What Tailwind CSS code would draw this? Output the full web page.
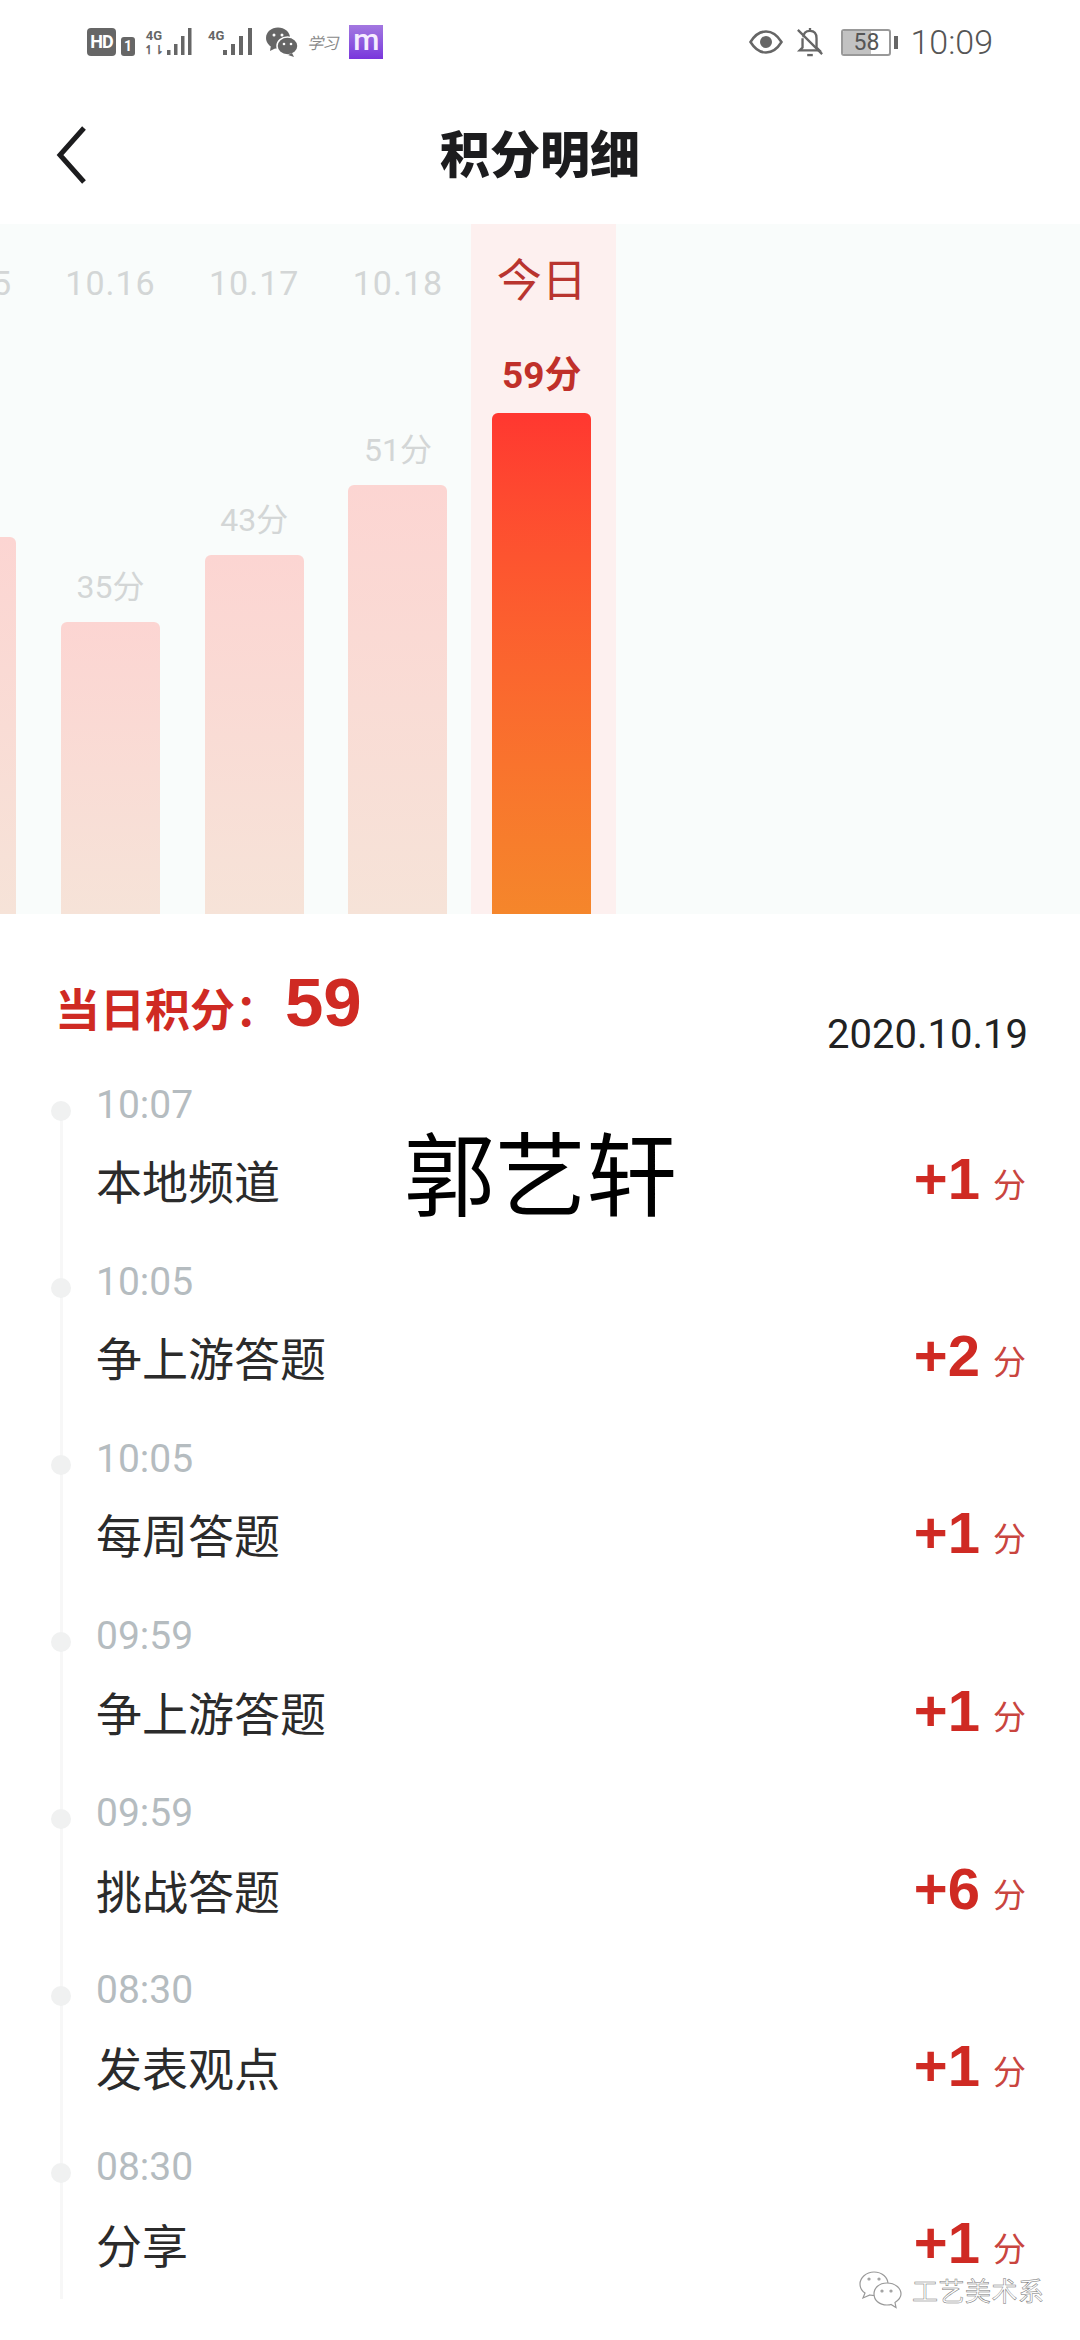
<!DOCTYPE html>
<html lang="zh">
<head>
<meta charset="utf-8">
<script src="https://cdn.jsdelivr.net/npm/@tailwindcss/browser@4"></script>
</head>
<body class="bg-white">
<div class="relative w-[1080px] h-[2340px] overflow-hidden bg-white font-['Roboto','Noto_Sans_CJK_SC',sans-serif]">

  <!-- status bar -->
  <div class="h-[84px] flex items-center justify-between pl-[87px] pr-[87px] text-[#666]">
    <div class="flex items-center">
      <span class="w-[29px] h-[28px] rounded-[4px] bg-[#666] text-white text-[18px] leading-[28px] font-bold text-center tracking-[-1px]">HD</span>
      <span class="ml-[5px] mt-[8px] w-[14px] h-[19px] rounded-[3px] bg-[#666] text-white text-[14px] leading-[19px] font-bold text-center">1</span>
      <div class="ml-[11px] w-[16px] flex flex-col items-center">
        <span class="text-[13px] leading-[15px] font-bold">4G</span>
        <span class="text-[12px] leading-[14px] font-bold">↿⇂</span>
      </div>
      <svg class="ml-[5px]" width="28" height="32" viewBox="0 0 28 32" fill="#666"><rect x="0" y="24" width="3.5" height="5"/><rect x="7" y="18" width="3.5" height="11"/><rect x="14" y="10" width="3.5" height="19"/><rect x="21" y="2" width="3.5" height="27"/></svg>
      <span class="ml-[13px] -mt-[14px] text-[13px] leading-[15px] font-bold">4G</span>
      <svg class="-ml-[1px]" width="34" height="32" viewBox="0 0 34 32" fill="#666"><rect x="0" y="24" width="4" height="5"/><rect x="8" y="18" width="4" height="11"/><rect x="16" y="10" width="4" height="19"/><rect x="25" y="2" width="4" height="27"/></svg>
      <svg class="ml-[9px]" width="32" height="30" viewBox="0 0 32 30" fill="#666"><ellipse cx="12" cy="11" rx="12" ry="10.5"/><path d="M5 18l-1 6 6-3z"/><ellipse cx="21.500" cy="19" rx="10.500" ry="9" stroke="#fff" stroke-width="1.500"/><path d="M26 26l2 4-6-2z"/><circle cx="8" cy="8" r="1.500" fill="#fff"/><circle cx="16" cy="8" r="1.500" fill="#fff"/><circle cx="18" cy="17" r="1.300" fill="#fff"/><circle cx="25" cy="17" r="1.300" fill="#fff"/></svg>
      <span class="ml-[9px] w-[34px] text-[16px] leading-[20px] italic text-[#8a8a8a] tracking-[-1px] font-['Noto_Sans_CJK_SC',sans-serif]">学习</span>
      <span class="ml-[8px] w-[34px] h-[34px] bg-gradient-to-b from-[#a377e0] to-[#7a35dc] text-[#f4ecff] text-[30px] leading-[30px] text-center font-medium">m</span>
    </div>
    <div class="flex items-center">
      <svg width="34" height="24" viewBox="0 0 34 24" fill="none" stroke="#666" stroke-width="2.500"><path d="M1.500 12C7 3 13 1.500 17 1.500S27 3 32.500 12C27 21 21 22.500 17 22.500S7 21 1.500 12z"/><circle cx="17" cy="12" r="6" fill="#666" stroke="none"/></svg>
      <svg class="ml-[13px]" width="28" height="32" viewBox="0 0 30 32" fill="none" stroke="#666" stroke-width="2.500"><path d="M15 1v3M8 11c0-5 3-7 7-7s7 2 7 8v10l3 3H4l3-3V12"/><path d="M2 3l26 26"/><path d="M12 30h6"/></svg>
      <div class="relative ml-[17px] w-[50px] h-[27px] rounded-[3px] border-2 border-[#999] overflow-hidden">
        <div class="h-full w-[28px] bg-[#c2c2c2]"></div>
        <span class="absolute inset-0 text-center text-[23px] leading-[23px] text-[#555]">58</span>
      </div>
      <span class="ml-[3px] w-[4px] h-[13px] bg-[#666]"></span>
      <span class="ml-[12px] text-[34px] leading-[40px] font-light text-[#555]">10:09</span>
    </div>
  </div>

  <!-- header -->
  <div class="relative h-[140px] flex items-center justify-center">
    <svg class="absolute left-[54px] top-[41px]" width="34" height="60" viewBox="0 0 34 60" fill="none" stroke="#1c1c1e" stroke-width="5"><path d="M30 3L6 30l24 27"/></svg>
    <span class="text-[50px] leading-[60px] font-black text-[#1c1c1e] font-['Noto_Sans_CJK_SC',sans-serif] -mt-[6px]">积分明细</span>
  </div>

  <!-- chart -->
  <div class="h-[690px] bg-[#f9fcfb] overflow-hidden flex pl-[40px] -ml-[145px] w-[1225px]">
    <div class="w-[143.7px] shrink-0 flex flex-col items-center">
      <span class="mt-[39px] text-[34px] leading-[40px] tracking-[1px] text-[#d3d6d6]">10.15</span>
      <div class="flex-1"></div>
      <div class="w-[99px] h-[377px] rounded-t-[6px] bg-gradient-to-b from-[#fcd5d2] to-[#f6e3d8]"></div>
    </div>
    <div class="w-[143.7px] shrink-0 flex flex-col items-center">
      <span class="mt-[39px] text-[34px] leading-[40px] tracking-[1px] text-[#d3d6d6]">10.16</span>
      <div class="flex-1"></div>
      <span class="mb-[15px] text-[32px] leading-[40px] text-[#d3d6d6]">35分</span>
      <div class="w-[99px] h-[292px] rounded-t-[6px] bg-gradient-to-b from-[#fcd5d2] to-[#f6e3d8]"></div>
    </div>
    <div class="w-[143.7px] shrink-0 flex flex-col items-center">
      <span class="mt-[39px] text-[34px] leading-[40px] tracking-[1px] text-[#d3d6d6]">10.17</span>
      <div class="flex-1"></div>
      <span class="mb-[15px] text-[32px] leading-[40px] text-[#d3d6d6]">43分</span>
      <div class="w-[99px] h-[359px] rounded-t-[6px] bg-gradient-to-b from-[#fcd5d2] to-[#f6e3d8]"></div>
    </div>
    <div class="w-[143.7px] shrink-0 flex flex-col items-center">
      <span class="mt-[39px] text-[34px] leading-[40px] tracking-[1px] text-[#d3d6d6]">10.18</span>
      <div class="flex-1"></div>
      <span class="mb-[15px] text-[32px] leading-[40px] text-[#d3d6d6]">51分</span>
      <div class="w-[99px] h-[429px] rounded-t-[6px] bg-gradient-to-b from-[#fcd5d2] to-[#f6e3d8]"></div>
    </div>
    <div class="ml-[1px] w-[145px] shrink-0 flex flex-col items-center bg-[#fdf0ef]">
      <span class="-ml-[3px] mt-[29px] text-[45px] leading-[50px] text-[#b9352f] font-['Noto_Sans_CJK_SC',sans-serif]">今日</span>
      <div class="flex-1"></div>
      <span class="-ml-[3px] mb-[17px] text-[37px] leading-[40px] font-bold text-[#c0302a]">59分</span>
      <div class="-ml-[3px] w-[99px] h-[501px] rounded-t-[6px] bg-gradient-to-b from-[#ff3730] to-[#f5862b]"></div>
    </div>
  </div>

  <!-- daily total -->
  <div class="h-[166px] px-[55px] flex justify-between">
    <div class="mt-[50px] h-[80px] flex items-center text-[#cf2a23]">
      <span class="w-[230px] mt-[8px] text-[45px] leading-[50px] font-bold whitespace-nowrap font-['Noto_Sans_CJK_SC',sans-serif]">当日积分：</span>
      <span class="-mt-[3px] text-[69px] leading-[80px] font-bold font-['Liberation_Sans',sans-serif]">59</span>
    </div>
    <span class="-mr-[3px] mt-[101px] text-[40px] leading-[40px] text-[#222]">2020.10.19</span>
  </div>

  <!-- timeline -->
  <div class="relative">
    <div class="absolute left-[60px] top-[30px] bottom-[20px] w-[3px] bg-[#f7f7f7]"></div>

    <div class="relative h-[177px] pl-[96px] pr-[55px]">
      <div class="absolute left-[51px] top-[21px] w-[20px] h-[20px] rounded-full bg-[#f0f1f1]"></div>
      <div class="pt-[1px] text-[39px] leading-[48px] text-[#b5bcc0]">10:07</div>
      <div class="mt-[20px] h-[60px] flex items-center justify-between">
        <span class="text-[46px] leading-[60px] text-[#2b2b2b] font-['Noto_Sans_CJK_SC',sans-serif]">本地频道</span>
        <span class="-mr-[3px] flex items-center text-[#cf2a23]"><b class="text-[58px] leading-[60px] font-bold font-['Liberation_Sans',sans-serif]">+1</b><span class="ml-[13px] mt-[8px] w-[35px] text-[33px] leading-[40px] font-['Noto_Sans_CJK_SC',sans-serif] text-[#c9453f]">分</span></span>
      </div>
    </div>

    <div class="relative h-[177px] pl-[96px] pr-[55px]">
      <div class="absolute left-[51px] top-[21px] w-[20px] h-[20px] rounded-full bg-[#f0f1f1]"></div>
      <div class="pt-[1px] text-[39px] leading-[48px] text-[#b5bcc0]">10:05</div>
      <div class="mt-[20px] h-[60px] flex items-center justify-between">
        <span class="text-[46px] leading-[60px] text-[#2b2b2b] font-['Noto_Sans_CJK_SC',sans-serif]">争上游答题</span>
        <span class="-mr-[3px] flex items-center text-[#cf2a23]"><b class="text-[58px] leading-[60px] font-bold font-['Liberation_Sans',sans-serif]">+2</b><span class="ml-[13px] mt-[8px] w-[35px] text-[33px] leading-[40px] font-['Noto_Sans_CJK_SC',sans-serif] text-[#c9453f]">分</span></span>
      </div>
    </div>

    <div class="relative h-[177px] pl-[96px] pr-[55px]">
      <div class="absolute left-[51px] top-[21px] w-[20px] h-[20px] rounded-full bg-[#f0f1f1]"></div>
      <div class="pt-[1px] text-[39px] leading-[48px] text-[#b5bcc0]">10:05</div>
      <div class="mt-[20px] h-[60px] flex items-center justify-between">
        <span class="text-[46px] leading-[60px] text-[#2b2b2b] font-['Noto_Sans_CJK_SC',sans-serif]">每周答题</span>
        <span class="-mr-[3px] flex items-center text-[#cf2a23]"><b class="text-[58px] leading-[60px] font-bold font-['Liberation_Sans',sans-serif]">+1</b><span class="ml-[13px] mt-[8px] w-[35px] text-[33px] leading-[40px] font-['Noto_Sans_CJK_SC',sans-serif] text-[#c9453f]">分</span></span>
      </div>
    </div>

    <div class="relative h-[177px] pl-[96px] pr-[55px]">
      <div class="absolute left-[51px] top-[21px] w-[20px] h-[20px] rounded-full bg-[#f0f1f1]"></div>
      <div class="pt-[1px] text-[39px] leading-[48px] text-[#b5bcc0]">09:59</div>
      <div class="mt-[21px] h-[60px] flex items-center justify-between">
        <span class="text-[46px] leading-[60px] text-[#2b2b2b] font-['Noto_Sans_CJK_SC',sans-serif]">争上游答题</span>
        <span class="-mr-[3px] flex items-center text-[#cf2a23]"><b class="text-[58px] leading-[60px] font-bold font-['Liberation_Sans',sans-serif]">+1</b><span class="ml-[13px] mt-[8px] w-[35px] text-[33px] leading-[40px] font-['Noto_Sans_CJK_SC',sans-serif] text-[#c9453f]">分</span></span>
      </div>
    </div>

    <div class="relative h-[177px] pl-[96px] pr-[55px]">
      <div class="absolute left-[51px] top-[21px] w-[20px] h-[20px] rounded-full bg-[#f0f1f1]"></div>
      <div class="pt-[1px] text-[39px] leading-[48px] text-[#b5bcc0]">09:59</div>
      <div class="mt-[22px] h-[60px] flex items-center justify-between">
        <span class="text-[46px] leading-[60px] text-[#2b2b2b] font-['Noto_Sans_CJK_SC',sans-serif]">挑战答题</span>
        <span class="-mr-[3px] flex items-center text-[#cf2a23]"><b class="text-[58px] leading-[60px] font-bold font-['Liberation_Sans',sans-serif]">+6</b><span class="ml-[13px] mt-[8px] w-[35px] text-[33px] leading-[40px] font-['Noto_Sans_CJK_SC',sans-serif] text-[#c9453f]">分</span></span>
      </div>
    </div>

    <div class="relative h-[177px] pl-[96px] pr-[55px]">
      <div class="absolute left-[51px] top-[21px] w-[20px] h-[20px] rounded-full bg-[#f0f1f1]"></div>
      <div class="pt-[1px] text-[39px] leading-[48px] text-[#b5bcc0]">08:30</div>
      <div class="mt-[22px] h-[60px] flex items-center justify-between">
        <span class="text-[46px] leading-[60px] text-[#2b2b2b] font-['Noto_Sans_CJK_SC',sans-serif]">发表观点</span>
        <span class="-mr-[3px] flex items-center text-[#cf2a23]"><b class="text-[58px] leading-[60px] font-bold font-['Liberation_Sans',sans-serif]">+1</b><span class="ml-[13px] mt-[8px] w-[35px] text-[33px] leading-[40px] font-['Noto_Sans_CJK_SC',sans-serif] text-[#c9453f]">分</span></span>
      </div>
    </div>

    <div class="relative h-[177px] pl-[96px] pr-[55px]">
      <div class="absolute left-[51px] top-[21px] w-[20px] h-[20px] rounded-full bg-[#f0f1f1]"></div>
      <div class="pt-[1px] text-[39px] leading-[48px] text-[#b5bcc0]">08:30</div>
      <div class="mt-[22px] h-[60px] flex items-center justify-between">
        <span class="text-[46px] leading-[60px] text-[#2b2b2b] font-['Noto_Sans_CJK_SC',sans-serif]">分享</span>
        <span class="-mr-[3px] flex items-center text-[#cf2a23]"><b class="text-[58px] leading-[60px] font-bold font-['Liberation_Sans',sans-serif]">+1</b><span class="ml-[13px] mt-[8px] w-[35px] text-[33px] leading-[40px] font-['Noto_Sans_CJK_SC',sans-serif] text-[#c9453f]">分</span></span>
      </div>
    </div>
  </div>

  <!-- name stamped over the picture -->
  <span class="absolute left-[404px] top-[1114px] text-[91px] leading-[110px] text-black font-['Noto_Sans_CJK_SC',sans-serif]">郭艺轩</span>

  <!-- watermark -->
  <div class="absolute left-[858px] top-[2270px] flex items-center">
    <svg width="46" height="40" viewBox="0 0 46 40" fill="#fff" stroke="#999" stroke-width="1.200"><path d="M16 2C8 2 2 8 2 14c0 4 2 7 5 9l-2 5 7-3c2 .5 3 .5 5 .5 7 0 13-5 13-11.500S24 2 16 2z"/><path d="M29 13c-8 0-13 5-13 11s5 11 13 11c2 0 3 0 4-.5l5 3-1-5c3-2 6-5 6-8.500 0-6-6-11-14-11z"/><circle cx="11" cy="9" r="1"/><circle cx="21" cy="9" r="1"/><circle cx="24" cy="21" r="1"/><circle cx="33" cy="21" r="1"/></svg>
    <span class="ml-[8px] text-[26px] leading-[32px] tracking-[0.5px] text-white [-webkit-text-stroke:0.5px_#777] font-['Noto_Sans_CJK_SC',sans-serif]">工艺美术系</span>
  </div>
</div>
</body>
</html>
